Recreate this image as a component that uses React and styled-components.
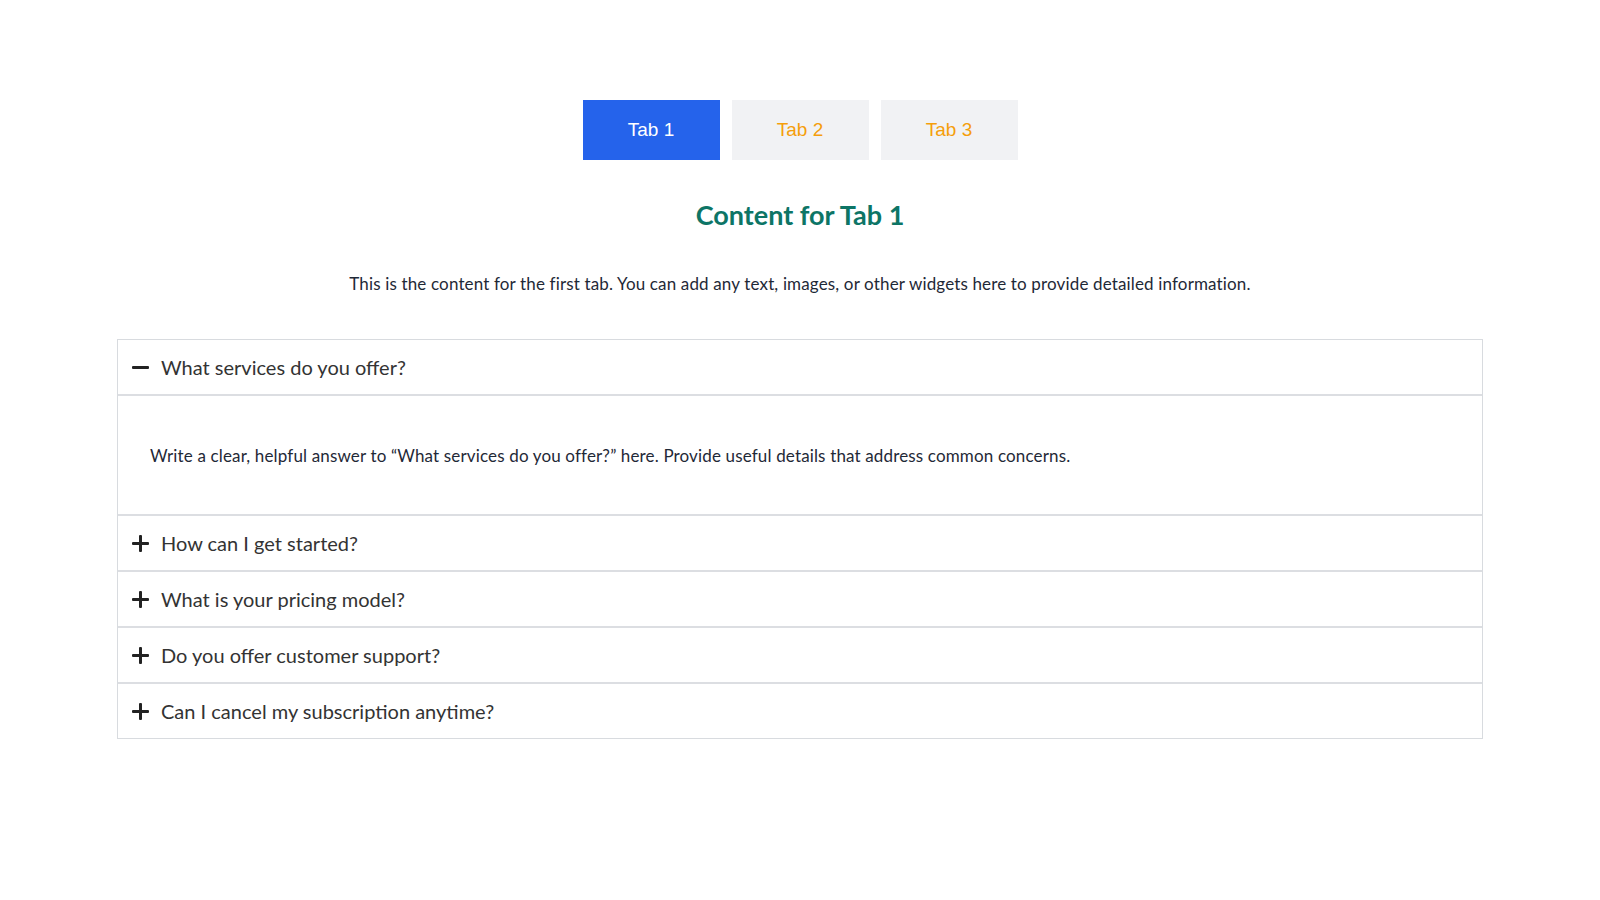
import React, { useState } from 'react'
import styled, { createGlobalStyle } from 'styled-components'

const GlobalStyle = createGlobalStyle`
  html, body {
    margin: 0;
    padding: 0;
    background: #ffffff;
  }
  * { box-sizing: border-box; }
`

const Page = styled.div`
  padding: 100px 117px 60px;
  font-family: 'Lato', 'Noto Sans', sans-serif;
`

const TabBar = styled.div`
  display: flex;
  justify-content: center;
  gap: 12px;
`

const Tab = styled.button`
  width: 137px;
  height: 60px;
  border: none;
  cursor: pointer;
  font-family: 'Liberation Sans', Arial, sans-serif;
  font-size: 19px;
  background: ${(props) => (props.$active ? '#2563eb' : '#f1f2f4')};
  color: ${(props) => (props.$active ? '#ffffff' : '#f59e0b')};
`

const Heading = styled.h2`
  margin: 37px 0 0;
  text-align: center;
  font-size: 27px;
  line-height: 36px;
  font-weight: 700;
  color: #0d7566;
`

const Intro = styled.p`
  margin: 39px 0 0;
  text-align: center;
  font-size: 17px;
  letter-spacing: 0.15px;
  line-height: 24px;
  color: #1f2937;
`

const Accordion = styled.div`
  margin-top: 43px;
  border: 1px solid #d8dbdf;
`

const Item = styled.div`
  & + & {
    border-top: 2px solid #dcdee2;
  }
`

const Header = styled.button`
  display: flex;
  align-items: center;
  gap: 12px;
  width: 100%;
  height: 54px;
  padding: 0 0 0 14px;
  border: none;
  background: #ffffff;
  cursor: pointer;
  text-align: left;
  font-family: 'Lato', 'Noto Sans', sans-serif;
  font-size: 20px;
  color: #333333;
`

const Answer = styled.div`
  border-top: 2px solid #dcdee2;
  padding: 49px 32px 47px;
  font-size: 17px;
  letter-spacing: 0.15px;
  line-height: 22px;
  color: #1f2937;
`

const Sign = ({ open }) => (
  <svg width="17" height="17" viewBox="0 0 17 17">
    <rect x="0" y="7" width="17" height="3" rx="1" fill="#222" />
    {!open && <rect x="7" y="0" width="3" height="17" rx="1" fill="#222" />}
  </svg>
)

const tabs = [
  {
    label: 'Tab 1',
    title: 'Content for Tab 1',
    body: 'This is the content for the first tab. You can add any text, images, or other widgets here to provide detailed information.',
  },
  {
    label: 'Tab 2',
    title: 'Content for Tab 2',
    body: 'This is the content for the second tab. You can add any text, images, or other widgets here to provide detailed information.',
  },
  {
    label: 'Tab 3',
    title: 'Content for Tab 3',
    body: 'This is the content for the third tab. You can add any text, images, or other widgets here to provide detailed information.',
  },
]

const faqs = [
  'What services do you offer?',
  'How can I get started?',
  'What is your pricing model?',
  'Do you offer customer support?',
  'Can I cancel my subscription anytime?',
]

export default function App() {
  const [tab, setTab] = useState(0)
  const [open, setOpen] = useState(0)

  return (
    <Page>
      <GlobalStyle />
      <TabBar>
        {tabs.map((t, i) => (
          <Tab key={t.label} $active={i === tab} onClick={() => setTab(i)}>
            {t.label}
          </Tab>
        ))}
      </TabBar>

      <Heading>{tabs[tab].title}</Heading>
      <Intro>{tabs[tab].body}</Intro>

      <Accordion>
        {faqs.map((q, i) => (
          <Item key={q}>
            <Header onClick={() => setOpen(open === i ? -1 : i)}>
              <Sign open={open === i} />
              {q}
            </Header>
            {open === i && (
              <Answer>
                Write a clear, helpful answer to “{q}” here. Provide useful details that address common concerns.
              </Answer>
            )}
          </Item>
        ))}
      </Accordion>
    </Page>
  )
}
